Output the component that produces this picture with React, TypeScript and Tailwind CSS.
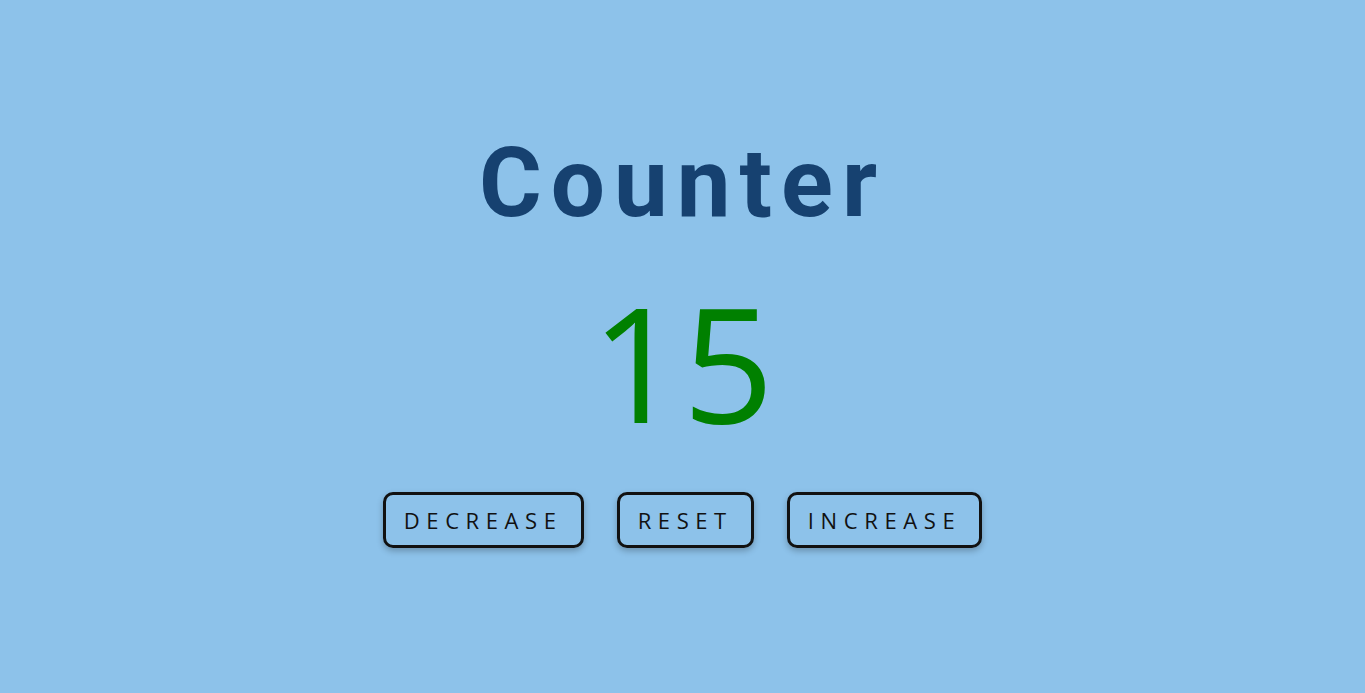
import { useState } from 'react';

export default function App() {
  const [count, setCount] = useState(15);

  const color = count > 0 ? 'text-[#008000]' : count < 0 ? 'text-[#ff0000]' : 'text-[#222]';
  const btn =
    'h-[56px] px-[18px] border-[3px] border-[#111] rounded-[10px] shadow-[0_3px_6px_rgba(0,0,0,0.25)] text-[22px] tracking-[0.3em] text-[#111]';

  return (
    <div className="min-h-screen w-full bg-[#8dc2ea] flex flex-col items-center font-['Open_Sans',sans-serif]">
      <h1 className="mt-[135px] font-['Roboto',sans-serif] font-bold text-[96px] leading-none tracking-[9px] text-[#164170]">
        Counter
      </h1>
      <div className={`mt-[50px] text-[160px] leading-none ${color}`}>{count}</div>
      <div className="mt-[51px] flex gap-[33px]">
        <button onClick={() => setCount(count - 1)} className={btn}>
          DECREASE
        </button>
        <button onClick={() => setCount(0)} className={btn}>
          RESET
        </button>
        <button onClick={() => setCount(count + 1)} className={btn}>
          INCREASE
        </button>
      </div>
    </div>
  );
}
